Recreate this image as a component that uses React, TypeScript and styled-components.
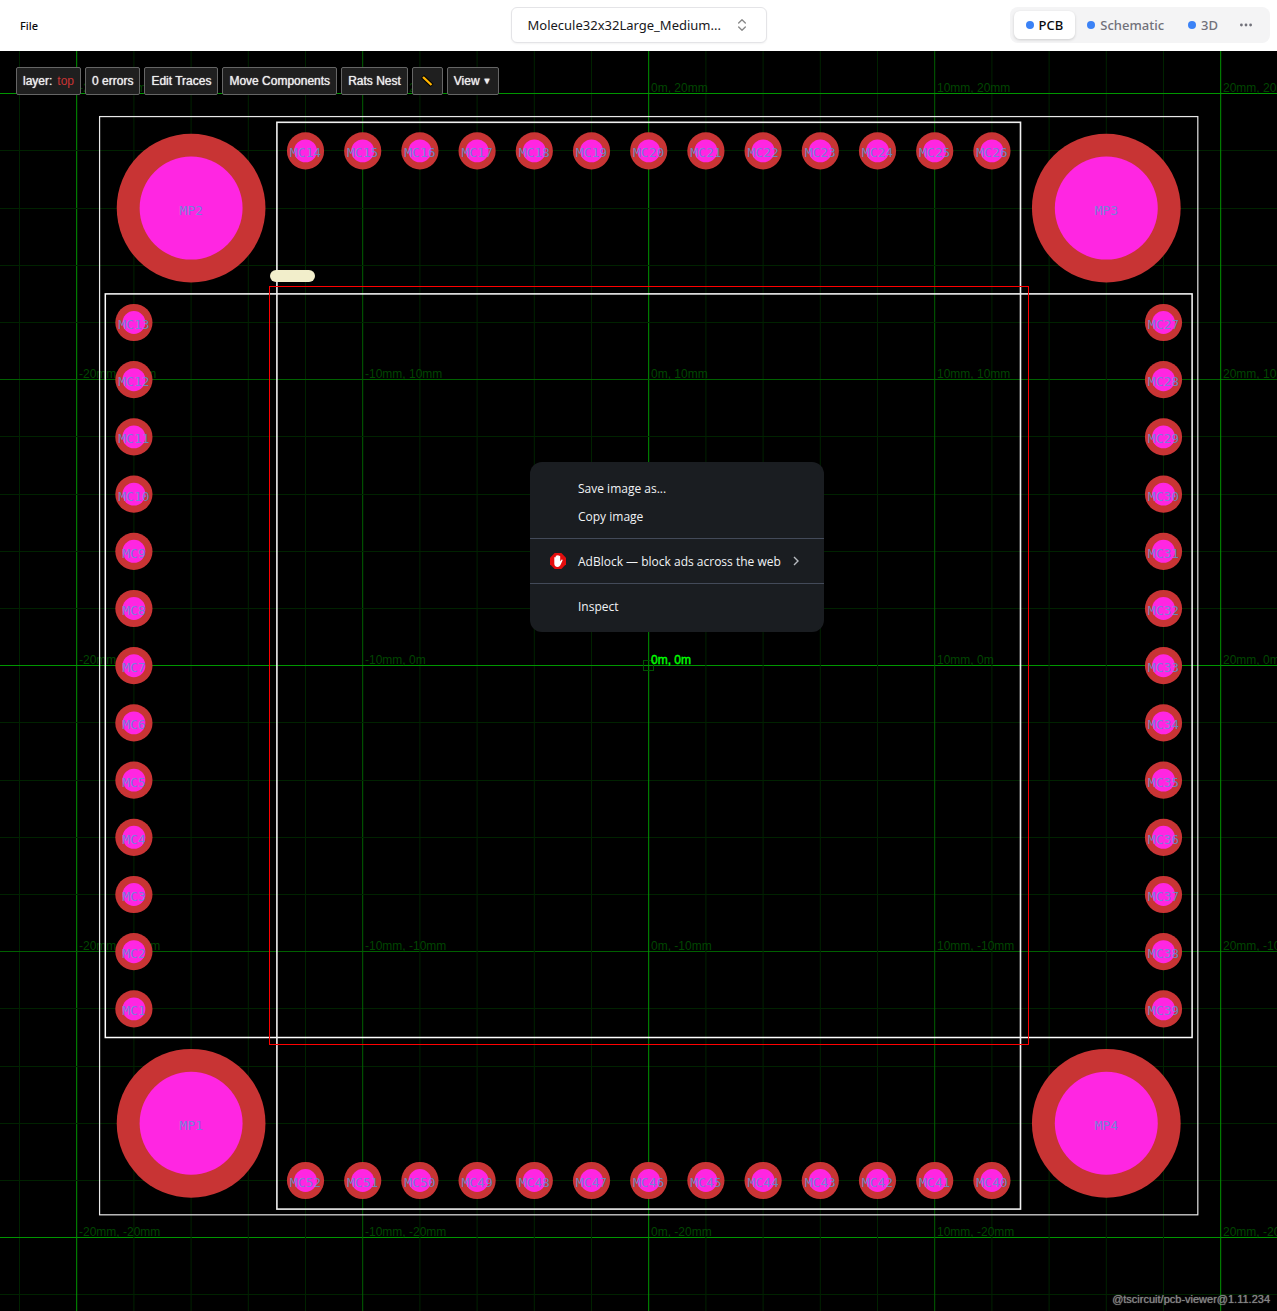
import React from 'react';
import styled, { createGlobalStyle } from 'styled-components';

const GlobalStyle = createGlobalStyle`
  *, *::before, *::after { box-sizing: border-box; }
  body { margin: 0; background: #fff; }
  button { font: inherit; margin: 0; cursor: pointer; }
`;

const uiFont = '"Noto Sans", "Open Sans", sans-serif';
const menuFont = '"Open Sans", "Noto Sans", sans-serif';
const toolFont = '"Liberation Sans", Arial, sans-serif';

const Page = styled.div`
  display: flex;
  flex-direction: column;
  height: 100vh;
  overflow: hidden;
  font-family: ${uiFont};
`;

const Header = styled.header`
  display: grid;
  grid-template-columns: 1fr auto 1fr;
  align-items: center;
  height: 51px;
  padding: 0 7px 1px;
  flex: none;
`;

const FileButton = styled.button`
  justify-self: start;
  padding: 5px 13px 4px;
  border: 0;
  background: transparent;
  color: #0a0a0a;
  font-size: 11px;
  line-height: 16px;
  font-weight: 500;
`;

const FilePicker = styled.button`
  display: flex;
  align-items: center;
  justify-content: space-between;
  width: 256px;
  height: 36px;
  padding: 0 16px;
  border: 1px solid #e4e4e7;
  border-radius: 6px;
  background: #fff;
  box-shadow: 0 1px 2px rgba(0, 0, 0, 0.05);
  color: #18181b;
  font-size: 13px;
  line-height: 20px;
  white-space: nowrap;
`;

const Tabs = styled.div`
  justify-self: end;
  display: flex;
  align-items: center;
  height: 36px;
  padding: 4px;
  border-radius: 8px;
  background: #f4f4f5;
`;

const Tab = styled.button<{ $active?: boolean; $compact?: boolean }>`
  display: flex;
  align-items: center;
  gap: 5px;
  height: 28px;
  padding: 0 12px;
  ${(p) => p.$compact && 'padding-left: 8px;'}
  border: 0;
  border-radius: 6px;
  background: ${(p) => (p.$active ? '#fff' : 'transparent')};
  box-shadow: ${(p) => (p.$active ? '0 1px 3px rgba(0, 0, 0, 0.16)' : 'none')};
  color: ${(p) => (p.$active ? '#0a0a0a' : '#71717a')};
  font-size: 13px;
  line-height: 20px;
  font-weight: 500;
`;

const Dot = styled.span`
  width: 8px;
  height: 8px;
  border-radius: 50%;
  background: #3b82f6;
`;

const Viewer = styled.main`
  position: relative;
  flex: 1;
  min-height: 0;
  background: #000;
  overflow: hidden;
`;

const Canvas = styled.svg`
  display: block;
  width: 100%;
  height: 100%;
`;

const Toolbar = styled.div`
  position: absolute;
  top: 16px;
  left: 16px;
  display: flex;
  gap: 4px;
`;

const Tool = styled.button`
  display: flex;
  align-items: center;
  justify-content: center;
  height: 28px;
  padding: 0 6px;
  border: 1px solid #666;
  border-radius: 2px;
  background: #1f1f1f;
  color: #eee;
  font-family: ${toolFont};
  font-size: 12px;
  line-height: 16px;
  white-space: pre;
  text-shadow: 0 0 1px currentColor;
`;

const LayerName = styled.span`
  margin-left: 5px;
  color: #c83434;
  text-shadow: none;
`;

const Caret = styled.span`
  margin-left: 3px;
  font-size: 9px;
`;

const Menu = styled.div`
  position: absolute;
  top: 411px;
  left: 530px;
  width: 294px;
  border-radius: 12px;
  background: #1a1d21;
  font-family: ${menuFont};
  overflow: hidden;
`;

const MenuGroup = styled.div`
  display: flex;
  flex-direction: column;
  padding: 8px 0;
  & + & { border-top: 1px solid #434a59; }
  &:first-child { padding-top: 12px; }
  &:last-child { padding-bottom: 12px; }
`;

const MenuItem = styled.button`
  display: grid;
  grid-template-columns: 16px 1fr 16px;
  align-items: center;
  column-gap: 12px;
  height: 28px;
  padding: 0 20px;
  border: 0;
  background: transparent;
  color: #f1f3f5;
  font-size: 12px;
  line-height: 16px;
  text-align: left;
  white-space: nowrap;
`;

const MenuLabel = styled.span`
  padding-top: 1px;
`;

const Version = styled.span`
  position: absolute;
  right: 7px;
  bottom: 5px;
  color: #858585;
  font-family: ${toolFont};
  font-size: 11px;
  line-height: 14px;
  text-shadow: 0 0 1px currentColor;
`;

const GridLabel = styled.text<{ $origin?: boolean }>`
  font-family: ${toolFont};
  font-size: 12px;
  fill: ${(p) => (p.$origin ? '#00ff00' : '#004600')};
  stroke: ${(p) => (p.$origin ? '#00ff00' : 'none')};
  stroke-width: ${(p) => (p.$origin ? 0.4 : 0)};
`;

const PadLabel = styled.text`
  font-family: "DejaVu Sans Mono", monospace;
  font-size: 13px;
  text-anchor: middle;
  fill: #5c94d8;
  fill-opacity: 0.85;
`;

/* Board millimetres to canvas pixels */
const SCALE = 28.6;
const X0 = 648.7;
const Y0 = 614.7;
const mx = (mm: number) => X0 + mm * SCALE;
const my = (mm: number) => Y0 - mm * SCALE;

const range = (from: number, to: number, step: number) => {
  const out: number[] = [];
  for (let v = from; v <= to; v += step) out.push(v);
  return out;
};

const unit = (n: number) => (n === 0 ? '0m' : `${n}mm`);

const lineColor = (v: number) => {
  if (v % 20 === 0) return '#009600';
  return v % 10 === 0 ? '#006000' : '#002200';
};

function Grid() {
  return (
    <g>
      {range(-50, 50, 2).map((v) => {
        const y = Math.floor(my(v)) + 0.5;
        return (
          <g key={v} stroke={lineColor(v)}>
            <line x1={mx(v)} x2={mx(v)} y1="0" y2="100%" />
            <line x1="0" x2="100%" y1={y} y2={y} />
          </g>
        );
      })}
    </g>
  );
}

function GridLabels() {
  const steps = range(-20, 20, 10);
  return (
    <g>
      {steps.flatMap((x) =>
        steps.map((y) => (
          <GridLabel key={`${x}:${y}`} x={Math.round(mx(x)) + 2} y={Math.round(my(y)) - 2} $origin={x === 0 && y === 0}>
            {`${unit(x)}, ${unit(y)}`}
          </GridLabel>
        )),
      )}
    </g>
  );
}

type PadSpec = { name: string; x: number; y: number; outer: number; hole: number };

const small = { outer: 0.65, hole: 0.4 };
const large = { outer: 2.6, hole: 1.8 };
const pads: PadSpec[] = [
  { name: 'MP1', x: -16, y: -16, ...large },
  { name: 'MP2', x: -16, y: 16, ...large },
  { name: 'MP3', x: 16, y: 16, ...large },
  { name: 'MP4', x: 16, y: -16, ...large },
  ...range(0, 12, 1).flatMap((i) => [
    { name: `MC${i + 1}`, x: -18, y: -12 + 2 * i, ...small },
    { name: `MC${i + 14}`, x: -12 + 2 * i, y: 18, ...small },
    { name: `MC${i + 27}`, x: 18, y: 12 - 2 * i, ...small },
    { name: `MC${i + 40}`, x: 12 - 2 * i, y: -18, ...small },
  ]),
];

function Outline({ hw, hh, color, width }: { hw: number; hh: number; color: string; width: number }) {
  return (
    <rect
      x={mx(-hw)}
      y={my(hh)}
      width={2 * hw * SCALE}
      height={2 * hh * SCALE}
      fill="none"
      stroke={color}
      strokeWidth={width}
    />
  );
}

function Board() {
  return (
    <Canvas role="img" aria-label="PCB layout">
      <Grid />
      <rect x="643.5" y="609.5" width="10" height="10" fill="none" stroke="#005000" />
      <GridLabels />
      <Outline hw={19.2} hh={19.2} color="#e8e8e8" width={1.2} />
      <Outline hw={19} hh={13} color="#fff" width={1.5} />
      <Outline hw={13} hh={19} color="#f0f0f0" width={1.6} />
      <rect x="269.5" y="235.5" width="759" height="758" fill="none" stroke="#ff0000" />
      <rect x="270" y="219" width="45" height="12" rx="6" fill="#f2eecb" />
      {pads.map((p) => (
        <g key={p.name}>
          <circle cx={mx(p.x)} cy={my(p.y)} r={p.outer * SCALE} fill="#c83434" />
          <circle cx={mx(p.x)} cy={my(p.y)} r={p.hole * SCALE} fill="#ff26e2" />
          <PadLabel x={mx(p.x)} y={Math.floor(my(p.y)) + 7}>{p.name}</PadLabel>
        </g>
      ))}
    </Canvas>
  );
}

const ChevronsIcon = () => (
  <svg width="16" height="16" viewBox="0 0 24 24" fill="none" stroke="#888" strokeWidth="2" strokeLinecap="round" strokeLinejoin="round">
    <path d="m7 15 5 5 5-5M7 9l5-5 5 5" />
  </svg>
);

const MoreIcon = () => (
  <svg width="16" height="16" viewBox="0 0 16 16" fill="#71717a">
    <circle cx="3.4" cy="8" r="1.4" />
    <circle cx="8" cy="8" r="1.4" />
    <circle cx="12.6" cy="8" r="1.4" />
  </svg>
);

const RulerIcon = () => (
  <svg width="17" height="16" viewBox="0 0 17 16">
    <path d="M3.5 3.5 13 12.5" stroke="#000" strokeWidth="4.4" />
    <path d="M4 4 12.5 12" stroke="#ffb400" strokeWidth="2.4" />
  </svg>
);

const BlockIcon = () => (
  <svg width="16" height="16" viewBox="0 0 16 16">
    <path d="M4.7 0h6.6L16 4.7v6.6L11.3 16H4.7L0 11.3V4.7z" fill="#e40d0d" />
    <path d="M4.3 9V4.8a.7.7 0 0 1 1.4 0V3.3a.75.75 0 0 1 1.5 0v-.6a.75.75 0 0 1 1.5 0v.7a.75.75 0 0 1 1.5 0v5l1.1-1.5c.5-.7 1.5-.3 1.2.5l-1.8 4.2C10 13.2 9.2 14 7.6 14 5.5 14 4.3 12.5 4.3 10.8z" fill="#fff" />
  </svg>
);

const ArrowIcon = () => (
  <svg width="16" height="16" viewBox="0 0 16 16" fill="none" stroke="#b8bbc0" strokeWidth="1.4">
    <path d="m1 4 4 4-4 4" />
  </svg>
);

export default function App() {
  return (
    <Page>
      <GlobalStyle />
      <Header>
        <FileButton>File</FileButton>
        <FilePicker>
          <span>Molecule32x32Large_Medium...</span>
          <ChevronsIcon />
        </FilePicker>
        <Tabs>
          <Tab $active><Dot />PCB</Tab>
          <Tab><Dot />Schematic</Tab>
          <Tab><Dot />3D</Tab>
          <Tab $compact aria-label="More"><MoreIcon /></Tab>
        </Tabs>
      </Header>
      <Viewer>
        <Board />
        <Toolbar>
          <Tool>layer:<LayerName>top</LayerName></Tool>
          <Tool>0 errors</Tool>
          <Tool>Edit Traces</Tool>
          <Tool>Move Components</Tool>
          <Tool>Rats Nest</Tool>
          <Tool aria-label="Measure"><RulerIcon /></Tool>
          <Tool>View<Caret>▼</Caret></Tool>
        </Toolbar>
        <Menu>
          <MenuGroup>
            <MenuItem><span /><MenuLabel>Save image as...</MenuLabel></MenuItem>
            <MenuItem><span /><MenuLabel>Copy image</MenuLabel></MenuItem>
          </MenuGroup>
          <MenuGroup>
            <MenuItem><BlockIcon /><MenuLabel>AdBlock — block ads across the web</MenuLabel><ArrowIcon /></MenuItem>
          </MenuGroup>
          <MenuGroup>
            <MenuItem><span /><MenuLabel>Inspect</MenuLabel></MenuItem>
          </MenuGroup>
        </Menu>
        <Version>@tscircuit/pcb-viewer@1.11.234</Version>
      </Viewer>
    </Page>
  );
}
